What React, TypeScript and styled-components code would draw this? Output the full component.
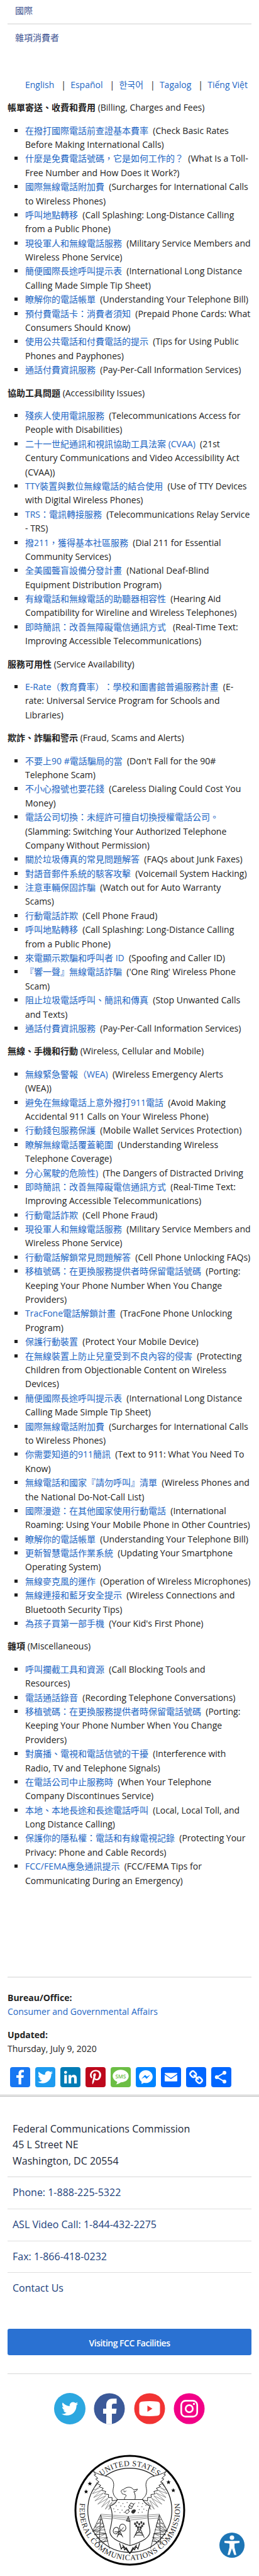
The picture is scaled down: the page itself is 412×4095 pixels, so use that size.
import React from 'react';
import styled, { createGlobalStyle } from 'styled-components';

const GlobalStyle = createGlobalStyle`
  *, *::before, *::after { box-sizing: border-box; }
  body {
    margin: 0;
    background: #fff;
    color: #222;
    font-family: "Open Sans", "Noto Sans CJK TC", "Noto Sans CJK KR", sans-serif;
    font-size: 14px;
    line-height: 1.6;
    text-spacing-trim: space-all;
  }
`;

const Page = styled.div`
  position: relative;
  width: 412px;
  height: 4095px;
  overflow: hidden;
`;

const Content = styled.main`
  padding: 0 12px;
`;

const SideNav = styled.nav`
  display: flex;
  flex-direction: column;
`;

const SideLink = styled.a`
  padding: 6px 12px 9px;
  color: #3c5190;
  & + & {
    border-top: 2px solid #e6e6e6;
    padding-top: 10px;
  }
`;

const Languages = styled.div`
  margin: 43px 0 14px;
  padding-left: 28px;
  white-space: pre;
`;

const Link = styled.a`
  color: #1d66c4;
  text-decoration: none;
`;

const GroupTitle = styled.p`
  margin: 0 0 14px;
  white-space: nowrap;
`;

const List = styled.ul`
  margin: 0 0 14px;
  padding-left: 28px;
  list-style: square;
`;

const Meta = styled.section`
  margin-top: 141px;
  padding-top: 21px;
  border-top: 2px solid #e8e8e8;
`;

const MetaItem = styled.div`
  margin-bottom: 14px;
`;

const MetaLabel = styled.div`
  font-weight: 700;
`;

const ShareBar = styled.div`
  display: flex;
  gap: 8px;
  padding: 3px 4px 0;
`;

const ShareButton = styled.a<{ $color: string }>`
  width: 32px;
  height: 32px;
  border-radius: 4px;
  background: ${(p) => p.$color};
  svg { display: block; }
`;

const Footer = styled.footer`
  margin-top: 12px;
  padding: 39px 12px 0;
  border-top: 3px double #bbb;
  font-size: 16px;
`;

const FooterRow = styled.div<{ $link?: boolean }>`
  padding: 12px 8px;
  color: ${(p) => (p.$link ? '#1c3f7c' : '#212738')};
  border-bottom: 1px solid ${(p) => (p.$link ? '#dedede' : '#d6d6d6')};
  &:first-child { padding-top: 0; }
  &:last-child { border-bottom: 0; }
`;

const VisitButton = styled.a`
  display: flex;
  align-items: center;
  justify-content: center;
  height: 42px;
  margin: 39px 0 29px;
  padding-top: 4px;
  border-radius: 3px;
  background: #2a71d2;
  color: #fff;
  font-size: 14px;
  font-weight: 600;
  letter-spacing: -0.5px;
`;

const Social = styled.div`
  display: flex;
  justify-content: center;
  gap: 13.4px;
  padding-top: 30px;
  border-top: 1px solid #d6d6d6;
  svg { display: block; }
`;

const SealWrap = styled.div`
  display: flex;
  justify-content: center;
  margin-top: 48px;
  svg { display: block; }
`;

const AccessButton = styled.button`
  position: absolute;
  right: 23px;
  bottom: 29px;
  width: 40px;
  height: 40px;
  padding: 0;
  border: 0;
  background: none;
  svg { display: block; }
`;

type Entry = [string, string, string?];
type Group = { title: string; english: string; items: Entry[] };

const NB = '\u00a0';

const groups: Group[] = [
  {
    title: '帳單寄送、收費和費用',
    english: '(Billing, Charges and Fees)',
    items: [
      ['在撥打國際電話前查證基本費率', '(Check Basic Rates Before Making International Calls)'],
      ['什麼是免費電話號碼，它是如何工作的？', '(What Is a Toll-Free Number and How Does it Work?)'],
      ['國際無線電話附加費', '(Surcharges for International Calls to Wireless Phones)'],
      ['呼叫地點轉移', '(Call Splashing: Long-Distance Calling from a Public Phone)'],
      ['現役軍人和無線電話服務', '(Military Service Members and Wireless Phone Service)'],
      ['簡便國際長途呼叫提示表', '(International Long Distance Calling Made Simple Tip Sheet)'],
      ['瞭解你的電話帳單', '(Understanding Your Telephone Bill)'],
      ['預付費電話卡：消費者須知', '(Prepaid Phone Cards: What Consumers Should Know)'],
      ['使用公共電話和付費電話的提示', '(Tips for Using Public Phones and Payphones)'],
      ['通話付費資訊服務', '(Pay-Per-Call Information Services)'],
    ],
  },
  {
    title: '協助工具問題',
    english: '(Accessibility Issues)',
    items: [
      ['殘疾人使用電訊服務', '(Telecommunications Access for People with Disabilities)'],
      ['二十一世紀通訊和視訊協助工具法案 (CVAA)', '(21st Century Communications and Video Accessibility Act (CVAA))'],
      ['TTY裝置與數位無線電話的結合使用', '(Use of TTY Devices with Digital Wireless Phones)'],
      ['TRS：電訊轉接服務', '(Telecommunications Relay Service - TRS)'],
      ['撥211，獲得基本社區服務', '(Dial 211 for Essential Community Services)'],
      ['全美國聾盲設備分發計畫', '(National Deaf-Blind Equipment Distribution Program)'],
      ['有線電話和無線電話的助聽器相容性', '(Hearing Aid Compatibility for Wireline and Wireless Telephones)'],
      ['即時簡訊：改善無障礙電信通訊方式', '(Real-Time Text: Improving Accessible Telecommunications)', NB + NB + ' '],
    ],
  },
  {
    title: '服務可用性',
    english: '(Service Availability)',
    items: [
      ['E-Rate（教育費率）：學校和圖書館普遍服務計畫', '(E-rate: Universal Service Program for Schools and Libraries)'],
    ],
  },
  {
    title: '欺詐、詐騙和警示',
    english: '(Fraud, Scams and Alerts)',
    items: [
      ['不要上90 #電話騙局的當', "(Don't Fall for the 90# Telephone Scam)"],
      ['不小心撥號也要花錢', '(Careless Dialing Could Cost You Money)'],
      ['電話公司切換：未經許可擅自切換授權電話公司。', '(Slamming: Switching Your Authorized Telephone Company Without Permission)'],
      ['關於垃圾傳真的常見問題解答', '(FAQs about Junk Faxes)'],
      ['對語音郵件系統的駭客攻擊', '(Voicemail System Hacking)'],
      ['注意車輛保固詐騙', '(Watch out for Auto Warranty Scams)'],
      ['行動電話詐欺', '(Cell Phone Fraud)'],
      ['呼叫地點轉移', '(Call Splashing: Long-Distance Calling from a Public Phone)'],
      ['來電顯示欺騙和呼叫者 ID', '(Spoofing and Caller ID)'],
      ['『響一聲』無線電話詐騙', "('One Ring' Wireless Phone Scam)"],
      ['阻止垃圾電話呼叫、簡訊和傳真', '(Stop Unwanted Calls and Texts)'],
      ['通話付費資訊服務', '(Pay-Per-Call Information Services)'],
    ],
  },
  {
    title: '無線、手機和行動',
    english: '(Wireless, Cellular and Mobile)',
    items: [
      ['無線緊急警報（WEA)', '(Wireless Emergency Alerts (WEA))'],
      ['避免在無線電話上意外撥打911電話', '(Avoid Making Accidental 911 Calls on Your Wireless Phone)'],
      ['行動錢包服務保護', '(Mobile Wallet Services Protection)'],
      ['瞭解無線電話覆蓋範圍', '(Understanding Wireless Telephone Coverage)'],
      ['分心駕駛的危險性)', '(The Dangers of Distracted Driving'],
      ['即時簡訊：改善無障礙電信通訊方式', '(Real-Time Text: Improving Accessible Telecommunications)'],
      ['行動電話詐欺', '(Cell Phone Fraud)'],
      ['現役軍人和無線電話服務', '(Military Service Members and Wireless Phone Service)'],
      ['行動電話解鎖常見問題解答', '(Cell Phone Unlocking FAQs)'],
      ['移植號碼：在更換服務提供者時保留電話號碼', '(Porting: Keeping Your Phone Number When You Change Providers)'],
      ['TracFone電話解鎖計畫', '(TracFone Phone Unlocking Program)'],
      ['保護行動裝置', '(Protect Your Mobile Device)'],
      ['在無線裝置上防止兒童受到不良內容的侵害', '(Protecting Children from Objectionable Content on Wireless Devices)'],
      ['簡便國際長途呼叫提示表', '(International Long Distance Calling Made Simple Tip Sheet)'],
      ['國際無線電話附加費', '(Surcharges for International Calls to Wireless Phones)'],
      ['你需要知道的911簡訊', '(Text to 911: What You Need To Know)'],
      ['無線電話和國家『請勿呼叫』清單', '(Wireless Phones and the National Do-Not-Call List)'],
      ['國際漫遊：在其他國家使用行動電話', '(International Roaming: Using Your Mobile Phone in Other Countries)'],
      ['瞭解你的電話帳單', '(Understanding Your Telephone Bill)'],
      ['更新智慧電話作業系統', '(Updating Your Smartphone Operating System)'],
      ['無線麥克風的運作', '(Operation of Wireless Microphones)'],
      ['無線連接和藍牙安全提示', '(Wireless Connections and Bluetooth Security Tips)'],
      ['為孩子買第一部手機', "(Your Kid's First Phone)"],
    ],
  },
  {
    title: '雜項',
    english: '(Miscellaneous)',
    items: [
      ['呼叫攔截工具和資源', '(Call Blocking Tools and Resources)'],
      ['電話通話錄音', '(Recording Telephone Conversations)'],
      ['移植號碼：在更換服務提供者時保留電話號碼', '(Porting: Keeping Your Phone Number When You Change Providers)'],
      ['對廣播、電視和電話信號的干擾', '(Interference with Radio, TV and Telephone Signals)'],
      ['在電話公司中止服務時', '(When Your Telephone Company Discontinues Service)'],
      ['本地、本地長途和長途電話呼叫', '(Local, Local Toll, and Long Distance Calling)'],
      ['保護你的隱私權：電話和有線電視記錄', '(Protecting Your Privacy: Phone and Cable Records)'],
      ['FCC/FEMA應急通訊提示', '(FCC/FEMA Tips for Communicating During an Emergency)'],
    ],
  },
];

const languages = ['English', 'Español', '한국어', 'Tagalog', 'Tiếng Việt'];

const birdPath =
  'M28 8.557a9.913 9.913 0 0 1-2.828.775 4.93 4.93 0 0 0 2.166-2.725 9.738 9.738 0 0 1-3.13 1.194 4.92 4.92 0 0 0-3.593-1.55 4.924 4.924 0 0 0-4.794 6.049c-4.09-.21-7.72-2.17-10.15-5.15a4.942 4.942 0 0 0-.665 2.477c0 1.71.87 3.214 2.19 4.1a4.968 4.968 0 0 1-2.23-.616v.06c0 2.39 1.7 4.38 3.952 4.83-.414.115-.85.174-1.297.174-.318 0-.626-.03-.928-.086a4.935 4.935 0 0 0 4.6 3.42 9.893 9.893 0 0 1-6.114 2.107c-.398 0-.79-.023-1.175-.068a13.953 13.953 0 0 0 7.55 2.213c9.056 0 14.01-7.507 14.01-14.013 0-.213-.005-.426-.015-.637.96-.695 1.795-1.56 2.455-2.55z';
const facebookPath =
  'M17.78 27.5V17.008h3.522l.527-4.09h-4.05v-2.61c0-1.182.33-1.99 2.023-1.99h2.166V4.66c-.375-.05-1.66-.16-3.155-.16-3.123 0-5.26 1.905-5.26 5.405v3.016h-3.53v4.09h3.53V27.5h4.223z';

const shares: { color: string; label: string; art: React.ReactNode }[] = [
  { color: '#1877f2', label: 'Facebook', art: <path d={facebookPath} /> },
  { color: '#1d9bf0', label: 'Twitter', art: <path d={birdPath} /> },
  {
    color: '#007bb5',
    label: 'LinkedIn',
    art: <path d="M6.227 12.61h4.19v13.48h-4.19V12.61zm2.095-6.7a2.43 2.43 0 0 1 0 4.86c-1.344 0-2.428-1.09-2.428-2.43s1.084-2.43 2.428-2.43m4.72 6.7h4.02v1.84h.058c.56-1.058 1.927-2.176 3.965-2.176 4.238 0 5.02 2.792 5.02 6.42v7.395h-4.183v-6.56c0-1.564-.03-3.574-2.178-3.574-2.18 0-2.514 1.7-2.514 3.46v6.668h-4.187V12.61z" />,
  },
  {
    color: '#bd081c',
    label: 'Pinterest',
    art: <path d="M16.539 4.5c-6.277 0-9.442 4.5-9.442 8.253 0 2.272.86 4.293 2.705 5.046.303.125.574.005.662-.33.061-.231.205-.816.27-1.06.088-.331.053-.447-.191-.736-.532-.627-.873-1.439-.873-2.591 0-3.338 2.498-6.327 6.505-6.327 3.548 0 5.497 2.168 5.497 5.062 0 3.81-1.686 7.025-4.188 7.025-1.382 0-2.416-1.142-2.085-2.545.397-1.674 1.166-3.48 1.166-4.689 0-1.081-.581-1.983-1.782-1.983-1.413 0-2.548 1.462-2.548 3.419 0 1.247.421 2.091.421 2.091l-1.699 7.199c-.505 2.137-.076 4.755-.039 5.019.021.158.223.196.314.077.13-.17 1.813-2.247 2.384-4.324.162-.587.929-3.631.929-3.631.46.876 1.801 1.646 3.227 1.646 4.247 0 7.128-3.871 7.128-9.053.003-3.918-3.317-7.568-8.361-7.568z" />,
  },
  {
    color: '#6cbe45',
    label: 'SMS message',
    art: (
      <>
        <path d="M16 4.3c-7 0-12.7 4.4-12.7 10 0 4 2.8 7.3 7 8.9.2 1.5-.5 3-2 4.3 3.3-.5 6-1.7 7.9-3.3 7 0 12.5-4.3 12.5-9.9S23 4.3 16 4.3z" />
        <text x="16" y="17.5" textAnchor="middle" fontSize="9" fontWeight="600" fill="#6cbe45" textLength="17" lengthAdjust="spacingAndGlyphs">SMS</text>
      </>
    ),
  },
  {
    color: '#0084ff',
    label: 'Messenger',
    art: <path d="M16 5C9.986 5 5.11 9.56 5.11 15.182c0 3.2 1.58 6.054 4.046 7.92V27l3.716-2.06c.99.276 2.04.425 3.128.425 6.014 0 10.89-4.56 10.89-10.183S22.013 5 16 5zm1.147 13.655L14.33 15.73l-5.423 3 5.946-6.31 2.816 2.925 5.42-3-5.946 6.31z" />,
  },
  {
    color: '#0166ff',
    label: 'Email',
    art: <path d="M26 21.25v-9s-9.1 6.35-9.984 6.68C15.144 18.616 6 12.25 6 12.25v9c0 1.25.266 1.5 1.5 1.5h17c1.266 0 1.5-.22 1.5-1.5zm-.015-10.765c0-.91-.265-1.235-1.485-1.235h-17c-1.255 0-1.5.39-1.5 1.3l.015.14s9.035 6.22 10 6.56c1.02-.395 9.985-6.7 9.985-6.7l-.015-.065z" />,
  },
  {
    color: '#0166ff',
    label: 'Copy link',
    art: <path d="M24.412 21.177c0-.36-.126-.665-.377-.917l-2.804-2.804a1.235 1.235 0 0 0-.913-.378c-.377 0-.7.144-.97.43.026.028.11.11.255.25.144.14.24.236.29.29s.117.14.2.256c.087.117.146.232.177.344.03.112.046.236.046.37 0 .36-.126.666-.377.918a1.25 1.25 0 0 1-.918.377 1.4 1.4 0 0 1-.373-.047 1.062 1.062 0 0 1-.345-.175 2.268 2.268 0 0 1-.256-.2 6.815 6.815 0 0 1-.29-.29c-.14-.142-.223-.23-.25-.254-.297.28-.445.607-.445.984 0 .36.126.664.377.916l2.778 2.79c.243.243.548.364.917.364.36 0 .665-.118.917-.35l1.982-1.97c.252-.25.378-.55.378-.9zm-9.477-9.504c0-.36-.126-.665-.377-.917l-2.777-2.79a1.235 1.235 0 0 0-.913-.378c-.35 0-.656.12-.917.364L7.967 9.92c-.254.252-.38.553-.38.903 0 .36.126.665.38.917l2.802 2.804c.242.243.547.364.916.364.377 0 .7-.14.97-.418-.026-.027-.11-.11-.255-.25s-.24-.235-.29-.29a2.675 2.675 0 0 1-.2-.255 1.052 1.052 0 0 1-.176-.344 1.396 1.396 0 0 1-.047-.37c0-.36.126-.662.377-.914.252-.252.557-.377.917-.377.136 0 .26.015.37.046.114.03.23.09.346.175.117.085.202.153.256.2.054.05.15.148.29.29.14.146.222.23.25.258.294-.278.442-.606.442-.983zM27 21.177c0 1.078-.382 1.99-1.146 2.736l-1.982 1.968c-.745.75-1.658 1.12-2.736 1.12-1.087 0-2.004-.38-2.75-1.143l-2.777-2.79c-.75-.747-1.12-1.66-1.12-2.737 0-1.106.392-2.046 1.183-2.818l-1.186-1.185c-.774.79-1.708 1.186-2.805 1.186-1.078 0-1.995-.376-2.75-1.13l-2.803-2.81C5.377 12.82 5 11.903 5 10.826c0-1.08.382-1.993 1.146-2.738L8.128 6.12C8.873 5.372 9.785 5 10.864 5c1.087 0 2.004.382 2.75 1.146l2.777 2.79c.75.747 1.12 1.66 1.12 2.737 0 1.105-.392 2.045-1.183 2.817l1.186 1.186c.774-.79 1.708-1.186 2.805-1.186 1.078 0 1.995.377 2.75 1.132l2.804 2.804c.754.755 1.13 1.672 1.13 2.75z" />,
  },
  {
    color: '#0166ff',
    label: 'Share',
    art: (
      <>
        <path d="M21 9 8.8 16 21 23" fill="none" stroke="#fff" strokeWidth="2" />
        <circle cx="21" cy="9" r="3" />
        <circle cx="8.8" cy="16" r="3" />
        <circle cx="21" cy="23" r="3" />
      </>
    ),
  },
];

const stars = [[246, 508], [228, 546], [622, 501], [645, 540]];

const starPoints = (cx: number, cy: number, r: number) =>
  Array.from({ length: 10 }, (_, i) => {
    const a = (Math.PI / 5) * i - Math.PI / 2;
    const d = i % 2 ? r * 0.42 : r;
    return `${cx + d * Math.cos(a)},${cy + d * Math.sin(a)}`;
  }).join(' ');

const dots = [
  [366, 600], [385, 598], [404, 603], [424, 598], [480, 600], [498, 603], [372, 614], [394, 615], [412, 618],
  [475, 616], [495, 618], [514, 612], [360, 628], [380, 632], [400, 634], [482, 632], [504, 630], [518, 636],
  [366, 642], [390, 646], [410, 645], [478, 646], [496, 644],
];

const Wing = () => (
  <g fill="none" stroke="#222" strokeWidth="3" strokeLinejoin="round">
    <path fill="#fff" d="M380 584 C364 572 352 556 358 530 C364 505 358 484 330 474 C306 468 280 462 262 448 L274 464 L266 466 L284 482 L274 486 L290 500 L278 505 L298 516 L290 523 L310 530 L302 540 L322 545 L316 557 L336 560 L334 574 L352 574 L352 590 L368 588 Z" />
    <path strokeWidth="2" stroke="#555" d="M276 508 L262 538 L290 530 M288 524 L258 556 L300 540 L264 574 L312 552 L270 590 L322 566 L284 606 L332 578 L302 620 L342 588 L320 630 L352 596 L336 632 L360 598" />
  </g>
);

const Tower = () => (
  <g fill="none" stroke="#222" strokeWidth="2.5">
    <path d="M298 656 L258 738 M298 656 L290 800 M298 656 L340 818" />
    <path strokeWidth="2" d="M288 680 L303 678 M278 698 L308 696 M270 716 L314 712 M262 734 L320 728 M268 752 L324 746 M278 770 L330 764 M288 788 L334 782 M270 716 L303 678 L314 712 L262 734 L308 696 M264 734 L324 746 L268 752 L314 712 M276 770 L324 746 L330 782 L288 788 L330 764 L300 806" />
  </g>
);

const Seal = () => (
  <svg width="177" height="177" viewBox="171 369 532 532" role="img" aria-label="FCC seal">
    <defs>
      <path id="seal-top" d="M225 635 A212 212 0 0 1 649 635" />
      <path id="seal-bottom" d="M202 585 A240 240 0 1 0 672 585" />
    </defs>
    <circle cx="437" cy="635" r="260" fill="#fff" stroke="#000" strokeWidth="9" />
    <circle cx="437" cy="635" r="201" fill="none" stroke="#111" strokeWidth="3.5" />
    <g fill="#222" fontFamily="Liberation Serif, serif" fontSize="37">
      <text textAnchor="middle">
        <textPath href="#seal-top" startOffset="50%" textLength="292">UNITED STATES</textPath>
      </text>
      <text textAnchor="middle">
        <textPath href="#seal-bottom" startOffset="50%" textLength="820">FEDERAL COMMUNICATIONS COMMISSION</textPath>
      </text>
    </g>
    {stars.map(([x, y]) => (
      <polygon key={x} points={starPoints(x, y, 11)} />
    ))}
    <Wing />
    <g transform="matrix(-1 0 0 1 874 0)"><Wing /></g>
    <Tower />
    <g transform="matrix(-1 0 0 1 876 0)"><Tower /></g>
    <path d="M298 654 L430 664 L580 654 M300 662 L430 673 L578 662 M302 672 L430 683 L576 672" fill="none" stroke="#777" strokeWidth="2.5" />
    <path d="M378 584 H498 C510 602 520 612 534 614 C516 650 526 690 533 730 C538 764 500 784 438 804 C376 784 336 764 342 730 C352 690 360 650 342 614 C358 612 368 602 378 584 Z" fill="#fff" stroke="#222" strokeWidth="3.5" />
    <path d="M352 658 L430 664 L526 658 M352 665 L430 673 L526 665 M353 672 L430 683 L525 672" fill="none" stroke="#777" strokeWidth="2.5" />
    <path d="M430 664 L420 686 L438 690 Z M438 686 V804" fill="#888" stroke="#222" strokeWidth="2.5" />
    {dots.map(([x, y]) => (
      <circle key={`${x}-${y}`} cx={x} cy={y} r="2.2" fill="#444" />
    ))}
    <g fill="#fff" stroke="#222" strokeWidth="3">
      <path d="M412 582 C408 572 424 570 418 562 C408 556 398 560 400 552 C392 546 394 538 406 536 C424 520 446 522 456 538 L474 534 C468 544 466 546 456 546 C464 558 464 570 462 582" />
      <path d="M410 540 C404 546 414 550 420 542" fill="none" />
    </g>
    <g fill="none" stroke="#222" strokeWidth="3">
      <path d="M442 600 L456 606 L444 628 L430 620 Z M424 632 L436 640 L424 652 L414 644 Z M438 622 L428 636 M456 606 L462 600 M434 612 L450 618" />
      <path d="M446 646 C454 654 464 646 464 634 C454 630 444 636 446 646 Z" fill="#333" />
      <path d="M388 732 L376 764 M388 732 L404 764 M380 750 H398 M384 742 L400 758 M392 742 L378 758" />
      <ellipse cx="371" cy="732" rx="13" ry="16" transform="rotate(25 371 732)" />
      <ellipse cx="403" cy="718" rx="15" ry="17" transform="rotate(-20 403 718)" />
      <path d="M364 738 L390 738 M390 736 L408 716" />
      <path d="M482 712 L456 766 M482 712 L506 766 M474 728 H490 M468 742 H496 M462 754 H502 M474 728 L498 752 M490 728 L464 752" />
    </g>
    <g fill="#333">
      {[[462, 700], [472, 694], [482, 702], [492, 694], [503, 700], [468, 710], [496, 710], [476, 718], [490, 718]].map(([x, y]) => (
        <rect key={`${x}-${y}`} x={x - 4} y={y - 6} width="8" height="11" />
      ))}
    </g>
    <path d="M388 792 L396 820 L406 808 L412 824 L420 814 L437 842 L452 814 L460 824 L468 808 L476 820 L484 792 M402 800 L437 842 L470 800" fill="none" stroke="#222" strokeWidth="4" />
  </svg>
);

export default function App() {
  return (
    <>
      <GlobalStyle />
      <Page>
        <Content>
          <SideNav>
            <SideLink>國際</SideLink>
            <SideLink>雜項消費者</SideLink>
          </SideNav>
          <Languages>
            {languages.map((name, i) => (
              <React.Fragment key={name}>
                {i > 0 && `${NB}${NB}${NB}|${NB}${NB}`}
                <Link>{name}</Link>
              </React.Fragment>
            ))}
          </Languages>
          {groups.map((group) => (
            <section key={group.title}>
              <GroupTitle>
                <strong>{group.title}</strong> {group.english}
              </GroupTitle>
              <List>
                {group.items.map(([label, english, gap]) => (
                  <li key={label}>
                    <Link>{label}</Link>
                    {(gap ?? NB + ' ') + english}
                  </li>
                ))}
              </List>
            </section>
          ))}
          <Meta>
            <MetaItem>
              <MetaLabel>Bureau/Office:</MetaLabel>
              <Link>Consumer and Governmental Affairs</Link>
            </MetaItem>
            <MetaItem>
              <MetaLabel>Updated:</MetaLabel>
              Thursday, July 9, 2020
            </MetaItem>
            <ShareBar>
              {shares.map((s) => (
                <ShareButton key={s.label} $color={s.color} aria-label={s.label}>
                  <svg width="32" height="32" viewBox="0 0 32 32" fill="#fff">{s.art}</svg>
                </ShareButton>
              ))}
            </ShareBar>
          </Meta>
        </Content>
        <Footer>
          <div>
            <FooterRow>
              Federal Communications Commission
              <br />
              45 L Street NE
              <br />
              Washington, DC 20554
            </FooterRow>
            <FooterRow $link>Phone: 1-888-225-5322</FooterRow>
            <FooterRow $link>ASL Video Call: 1-844-432-2275</FooterRow>
            <FooterRow $link>Fax: 1-866-418-0232</FooterRow>
            <FooterRow $link>Contact Us</FooterRow>
          </div>
          <VisitButton>Visiting FCC Facilities</VisitButton>
          <Social>
            <svg width="50" height="50" viewBox="0 0 50 50">
              <circle cx="25" cy="25" r="25" fill="#2ca7e0" />
              <path d={birdPath} fill="#fff" transform="translate(7.5 7.5) scale(1.1)" />
            </svg>
            <svg width="50" height="50" viewBox="0 0 50 50">
              <circle cx="25" cy="25" r="24.5" fill="#3b5998" />
              <path d="M20 49.5V33h-5v-8h5v-5c0-7 3.5-11 10-11h6.5v8H32c-2 0-3 1-3 3v5h7.5l-1 8H29v16.5z" fill="#fff" />
            </svg>
            <svg width="50" height="50" viewBox="0 0 50 50">
              <circle cx="25" cy="25" r="24.5" fill="#f13333" />
              <path d="M13 13.8q12-1.600 24 0 4.500.4 4.500 5.200v12q0 4.800-4.500 5.200-12 1.600-24 0-4.500-.4-4.500-5.200V19q0-4.800 4.500-5.200z" fill="#fff" />
              <path d="M21.5 20v10l8-5z" fill="#f13333" />
            </svg>
            <svg width="50" height="50" viewBox="0 0 50 50">
              <circle cx="25" cy="25" r="24.5" fill="#f20087" />
              <rect x="12.3" y="12.3" width="25.4" height="25.4" rx="7" fill="none" stroke="#fff" strokeWidth="2.7" />
              <circle cx="25" cy="25" r="5.7" fill="none" stroke="#fff" strokeWidth="2.7" />
              <circle cx="32.5" cy="17.5" r="1.7" fill="#fff" />
            </svg>
          </Social>
          <SealWrap>
            <Seal />
          </SealWrap>
        </Footer>
        <AccessButton aria-label="Accessibility">
          <svg width="40" height="40" viewBox="0 0 40 40">
            <circle cx="20" cy="20" r="20" fill="#1d75b5" />
            <circle cx="20" cy="8" r="3.6" fill="#fff" />
            <path d="M8 13.2h24v3l-8 1.2v6l3 12h-3.400L20 25l-3.600 10.400H13l3-12v-6l-8-1.200z" fill="#fff" />
          </svg>
        </AccessButton>
      </Page>
    </>
  );
}
